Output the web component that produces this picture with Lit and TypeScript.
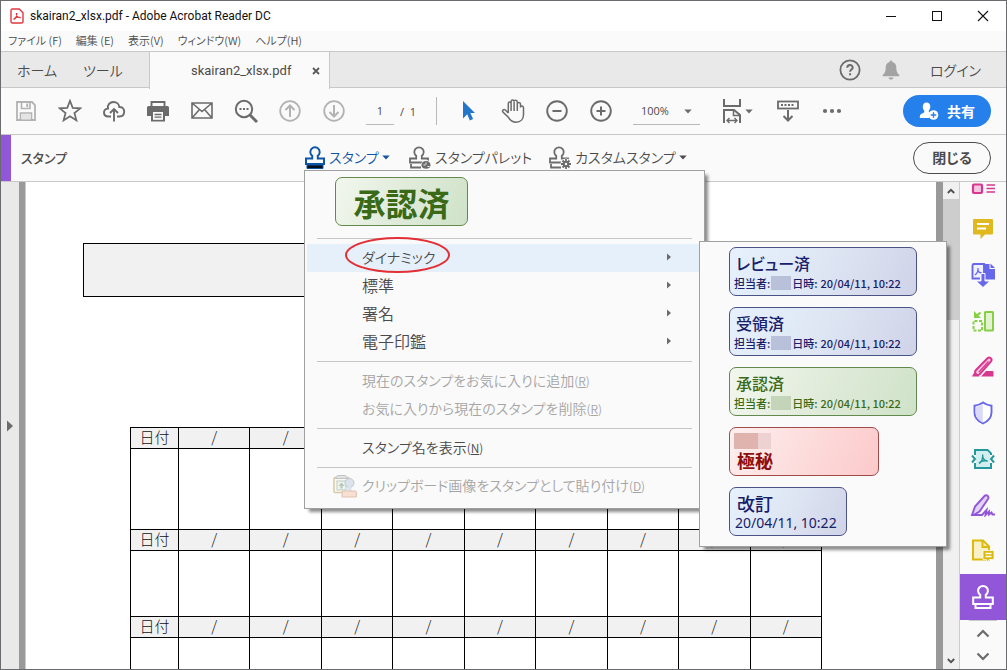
import { LitElement, html, css, svg, nothing } from "lit";
import { customElement, property } from "lit/decorators.js";

const icons: Record<string, [number, number, unknown]> = {
  pdf: [14, 16, svg`<path d="M1.8 1h7.4L13 4.8v8.4A1.5 1.5 0 0 1 11.5 15h-9A1.5 1.5 0 0 1 1 13.500V2.500A1.500 1.500 0 0 1 1.800 1z" fill="#fff" stroke="#e2373f" stroke-width="1.400"/><path d="M3.500 11.500c2-1 3.500-4 3.300-6.500M6.300 5c0 3 2 5 4.500 4.600M3.500 11.300c1.500-1.800 4.500-2.600 7.200-1.700" fill="none" stroke="#e2373f" stroke-width="1.200"/>`],
  min: [12, 12, svg`<path d="M1 6.500h10" stroke="#111"/>`],
  max: [12, 12, svg`<rect x="1.500" y="1.500" width="9" height="9" fill="none" stroke="#111"/>`],
  close: [12, 12, svg`<path d="M1 1l10 10M11 1L1 11" stroke="#111" stroke-width="1.100"/>`],
  tabx: [8, 8, svg`<path d="M1 1l6 6M7 1L1 7" stroke="#5a5a5a" stroke-width="1.800"/>`],
  help: [22, 22, svg`<circle cx="11" cy="11" r="9.600" fill="none" stroke="#6b6b6b" stroke-width="1.800"/><path d="M8.300 8.800c0-3.600 5.400-3.500 5.400-.3 0 2-2.600 2-2.600 4.200M11.100 14.200v2" fill="none" stroke="#6b6b6b" stroke-width="2"/>`],
  bell: [18, 20, svg`<path d="M9 0.500c1 0 1.300.6 1.300 1.500 2.800.6 4 2.800 4 5.500 0 3.500.6 5.500 3 7.500v1.300H.7V15c2.400-2 3-4 3-7.500 0-2.700 1.200-4.900 4-5.500 0-.9.300-1.500 1.300-1.500zM6.500 17.500h5c-.3 1.500-1.300 2-2.500 2s-2.200-.5-2.500-2z" fill="#a3a3a3"/>`],
  save: [22, 22, svg`<path d="M2 2h15l3 3v15H2z" fill="none" stroke="#b3b3b3" stroke-width="1.800"/><path d="M6.500 2v6.500h8.500V2M5.500 20v-7h11v7" fill="none" stroke="#b3b3b3" stroke-width="1.600"/><path d="M11.200 3.500h2v3.500h-2z" fill="#b3b3b3"/><path d="M6.500 14h9v5.500h-9z" fill="#e4e4e4"/>`],
  star: [24, 24, svg`<path d="M12 1.800l2.700 7.100 7.600.4-5.900 4.700 2 7.400L12 17.200l-6.400 4.200 2-7.400L1.700 9.300l7.600-.4z" fill="none" stroke="#6b6b6b" stroke-width="1.700"/>`],
  cloud: [24, 22, svg`<path d="M9 16.500H6.500C3.500 16.500 2 14.800 2 12.500s1.800-4 4-3.900C5 5 8 2 11.500 2c3.200 0 5.600 2.200 5.800 5 2.800-.3 4.900 1.800 4.900 4.600 0 2.900-1.900 4.900-4.700 4.900H15" fill="none" stroke="#6b6b6b" stroke-width="1.900"/><path d="M12 21.500v-12M8 13l4-4 4 4" fill="none" stroke="#6b6b6b" stroke-width="1.900"/>`],
  print: [24, 22, svg`<path d="M5.500 6V2h13v4" fill="none" stroke="#6b6b6b" stroke-width="1.900"/><path d="M2.500 6h19A1.500 1.500 0 0 1 23 7.500V16h-4v5.500H5V16H1V7.500A1.500 1.500 0 0 1 2.500 6z" fill="#6b6b6b"/><path d="M7 12h10v7.800H7z" fill="#fafafa"/><path d="M8.500 14.500h7M8.500 17.200h7" stroke="#6b6b6b" stroke-width="1.300"/>`],
  mail: [24, 20, svg`<path d="M2 2h20v15H2zM2 2l10 8.500L22 2M2 17l7.500-8.500M22 17l-7.500-8.500" fill="none" stroke="#6b6b6b" stroke-width="1.600"/>`],
  search: [24, 24, svg`<circle cx="10" cy="10" r="8.200" fill="none" stroke="#6b6b6b" stroke-width="2"/><path d="M16 16l7 7" stroke="#6b6b6b" stroke-width="3"/><path d="M5.500 9h2v2h-2zM9 9h2v2H9zM12.500 9h2v2h-2z" fill="#6b6b6b"/>`],
  up: [22, 22, svg`<circle cx="11" cy="11" r="9.800" fill="none" stroke="#b3b3b3" stroke-width="1.800"/><path d="M11 17V6M6.500 10L11 5.500l4.500 4.500" fill="none" stroke="#b3b3b3" stroke-width="2"/>`],
  down: [22, 22, svg`<circle cx="11" cy="11" r="9.800" fill="none" stroke="#b3b3b3" stroke-width="1.800"/><path d="M11 5v11M6.500 12l4.500 4.500 4.500-4.500" fill="none" stroke="#b3b3b3" stroke-width="2"/>`],
  cursor: [14, 22, svg`<path d="M1 1v17.500l4.200-4.200 2.700 6.200 3.200-1.400-2.700-6H13z" fill="#2476c8"/>`],
  hand: [24, 26, svg`<path d="M7.300 15V5.500c0-2 2.800-2 2.800 0V3.600c0-2.100 3-2.100 3 0v0c0-2 3.200-1.800 3.200.3v2c0-2 3.200-1.900 3.200.2v3.400c0-2 3-1.900 3 .2V16.500c0 4.500-2.800 7.700-7.500 7.700-4 0-6-2-7.700-5L1.900 14c-1-2 1-3.200 2.500-2L7.300 15M10.100 5.500V13M13.100 3.800V13M16.300 5V13" fill="none" stroke="#6b6b6b" stroke-width="1.500"/>`],
  minus: [22, 22, svg`<circle cx="11" cy="11" r="9.800" fill="none" stroke="#6b6b6b" stroke-width="1.900"/><path d="M6.500 11h9" stroke="#6b6b6b" stroke-width="2"/>`],
  plus: [22, 22, svg`<circle cx="11" cy="11" r="9.800" fill="none" stroke="#6b6b6b" stroke-width="1.900"/><path d="M6.500 11h9M11 6.500v9" stroke="#6b6b6b" stroke-width="2"/>`],
  caret: [8, 5, svg`<path d="M.3.500h7.400L4 4.500z" fill="currentColor"/>`],
  fit: [18, 26, svg`<path d="M1 1v7h16V1M1 25V12h10l6 5v8" fill="none" stroke="#6b6b6b" stroke-width="2"/><path d="M10.500 12v5.500H17" fill="none" stroke="#6b6b6b" stroke-width="1.500"/><path d="M4 22.500h10M6.500 20L4 22.500 6.500 25M11.500 20l2.500 2.500-2.500 2.500" fill="none" stroke="#6b6b6b" stroke-width="1.400"/>`],
  keyboard: [22, 22, svg`<rect x="1" y="1.500" width="20" height="7" fill="none" stroke="#6b6b6b" stroke-width="1.800"/><path d="M4 5h14" stroke="#6b6b6b" stroke-width="1.800" stroke-dasharray="2 1.500"/><path d="M11 10v10.500M6.500 16l4.500 4.500 4.500-4.500" fill="none" stroke="#6b6b6b" stroke-width="2"/>`],
  dots: [20, 6, svg`<circle cx="3" cy="3" r="2.100" fill="#6b6b6b"/><circle cx="10" cy="3" r="2.100" fill="#6b6b6b"/><circle cx="17" cy="3" r="2.100" fill="#6b6b6b"/>`],
  person: [20, 18, svg`<path d="M7.500.500c2.500 0 3.800 1.700 3.800 4.200 0 1.800-.8 3-1.600 4-.2 1.300.6 1.600 1.800 2.100-1.500 1.500-1.800 3.500-1 5.200H.8c0-3.500.8-4 3-4.800 1.200-.5 1.800-1 1.500-2.500-.8-1-1.500-2.200-1.500-4C3.800 2.200 5 .5 7.500.5z" fill="#fff"/><circle cx="14.500" cy="13" r="4.800" fill="#fff"/><path d="M14.500 10.200v5.600M11.700 13h5.600" stroke="#2680eb" stroke-width="1.400"/>`],
  stamp: [22, 24, svg`<path d="M8.200 13.500V10.800a4.700 4.700 0 1 1 5.600 0v2.700H20v5.500H2v-5.500z" fill="none" stroke="#0f55a5" stroke-width="2"/><path d="M3 20h16v3.500H3z" fill="#06101c" stroke="#0f55a5" stroke-width="1"/>`],
  palette: [24, 24, svg`<path d="M8.200 13.500V10.800a4.700 4.700 0 1 1 5.600 0v2.700H20v4H2v-4zM3 19v3.500h10" fill="none" stroke="#6b6b6b" stroke-width="1.800"/><circle cx="18" cy="20" r="5" fill="#fafafa"/><path d="M18 16c3 0 4.500 2 4.500 4.200 0 2.300-2 3.600-4.500 3.600s-4.500-1.300-4.500-3.600C13.500 18 15 16 18 16z" fill="#6b6b6b"/><path d="M15.500 20h2M19.500 21.500h2M18 17.500v2" stroke="#fafafa"/>`],
  custom: [24, 24, svg`<path d="M8.200 13.500V10.800a4.700 4.700 0 1 1 5.600 0v2.700H20v4H2v-4zM3 19v3.500h10" fill="none" stroke="#6b6b6b" stroke-width="1.800"/><circle cx="18" cy="19" r="5.500" fill="#fafafa"/><path d="M18 14v10M13 19h10M14.500 15.500l7 7M21.500 15.500l-7 7" stroke="#6b6b6b" stroke-width="1.800"/><circle cx="18" cy="19" r="3.300" fill="#6b6b6b"/><circle cx="18" cy="19" r="1.200" fill="#fafafa"/>`],
  clip: [26, 26, svg`<rect x="2" y="4.500" width="15" height="15" rx="1" fill="#faf8f2" stroke="#d6cba8" stroke-width="1.500"/><path d="M5.500 2.500h8l2 3h-12z" fill="#e0e3e4" stroke="#c4c4c4"/><rect x="5" y="8" width="9" height="9" fill="#eef3f0" stroke="#c0cbc4"/><path d="M9.500 9.500l3 3.500h-6zM8.500 13h2v2.500h-2z" fill="#b4c9b7"/><circle cx="17.500" cy="10" r="4.500" fill="#dce3ed" stroke="#c0c8d2"/><path d="M16 14h3l1 4.500h-5z" fill="#dce3ed"/><path d="M10.500 18H24l.5 3v3H10v-3z" fill="#f7dfd2" stroke="#dfc3b4"/>`],
  organize: [26, 24, svg`<rect x="3" y="13.500" width="9" height="8.500" rx="1" fill="#f2c8e0" stroke="#d83790" stroke-width="2.200"/><path d="M16.500 14h8.500M16.500 17.500h8.500M16.500 21h8.500" stroke="#d83790" stroke-width="1.400"/>`],
  comment: [22, 22, svg`<path d="M2 1h18a1 1 0 0 1 1 1v13.500a1 1 0 0 1-1 1h-7L8.500 21v-4.500H2a1 1 0 0 1-1-1V2a1 1 0 0 1 1-1z" fill="#dfb91f"/><path d="M5 6h12M5 10.500h9" stroke="#fff" stroke-width="1.900"/>`],
  exportpdf: [26, 26, svg`<path d="M10 16.500H2.500V3.500A1.500 1.500 0 0 1 4 2h10v9" fill="#f0f0ff" stroke="#6767ec" stroke-width="1.900"/><path d="M14 2h5.500v5H25v10.500H14z" fill="#6767ec"/><path d="M20.500 1.500L25 6h-4.500z" fill="#6767ec"/><path d="M5 13c2-1.500 3.300-3.800 3-7M7.800 8c.5 1.800 2 3 4 3" fill="none" stroke="#6767ec" stroke-width="1.300"/><path d="M11 11.500h4V19h5l-7 6.500L6 19h5z" fill="#6767ec" stroke="#fafafa" stroke-width="1"/>`],
  combine: [24, 24, svg`<rect x="14" y="3" width="8" height="18.500" rx=".5" fill="#e2f2d3" stroke="#85d044" stroke-width="2"/><path d="M11 12H2.500v9.500H11z" fill="none" stroke="#85d044" stroke-width="2" stroke-dasharray="3 1.500"/><path d="M3 2v7h7L7.500 6.500l3-2.500-2-1-2.500 2z" fill="#85d044"/>`],
  edit: [24, 24, svg`<path d="M10 21.500L15 16h6.500a1 1 0 0 1 1 1v4.500z" fill="#d83790"/><path d="M1 21.500l1.500-3 3-1 3 4z" fill="#d83790"/><path d="M4.500 15.500L16.500 3.200c2.200-2 5.300.8 3.500 3.200L8.500 19.500c-2.500 1.500-5.500-1-4-4z" fill="#f3c3de" stroke="#d83790" stroke-width="2"/><path d="M8 17L17.500 6.500" stroke="#d83790" stroke-width="1.200"/>`],
  shield: [22, 24, svg`<path d="M11 1.500c2.500 1.800 5 2.800 8.500 3.200v6.800c0 5.500-4 9-8.500 11-4.500-2-8.500-5.500-8.500-11V4.700C6 4.300 8.500 3.300 11 1.500z" fill="#fff" stroke="#6767ec" stroke-width="1.900"/><path d="M10.800 3v18.500C7 19.500 3.700 16.500 3.700 11.500V6C6.500 5.500 8.800 4.500 10.800 3z" fill="#dadaf8"/>`],
  compress: [26, 22, svg`<path d="M5 7V2h12.500L21 5.500V7M5 15v5h16v-5" fill="none" stroke="#23979b" stroke-width="2"/><path d="M6 3h11l3 3v13H6z" fill="#d3eeee"/><path d="M2 7.500L5 11l-3 3.500M24 7.500L21 11l3 3.500" fill="none" stroke="#23979b" stroke-width="2"/><path d="M9 15.500c2.500-1.500 4-4.500 3.700-9M12.700 9c.7 2.200 2.600 4 5 4M9 15c2-2 5-2.500 8.500-2" fill="none" stroke="#23979b" stroke-width="1.400"/>`],
  sign: [26, 24, svg`<path d="M2 22l3-8.500L14.500 3c2-2 5 .5 3.500 3L9.500 18.500 3.500 22z" fill="#e2d3f6" stroke="#9256d9" stroke-width="1.900"/><path d="M2 22h10l4.500-5-1 5 3.500-3.500v3l2.500-2 1 2H25" fill="none" stroke="#9256d9" stroke-width="1.900"/>`],
  note: [24, 24, svg`<path d="M2 1.500h10l6 6V20.500H2z" fill="#f8f1c8" stroke="#ddb90a" stroke-width="2"/><path d="M11.500 1.500v6.500H18" fill="none" stroke="#ddb90a" stroke-width="2"/><path d="M12 11.500h11v9h-5L15.500 23.500v-3H12z" fill="#ddb90a" stroke="#fafafa" stroke-width=".8"/><path d="M14.500 14.500h6M14.500 17.500h6" stroke="#fff" stroke-width="1.300"/>`],
  stampw: [22, 26, svg`<path d="M8.200 13.500V10.800a4.900 4.900 0 1 1 5.600 0v2.700h7V20H1.200v-6.500zM3.500 20v4h15v-4" fill="none" stroke="#fff" stroke-width="2"/>`],
  chevu: [14, 9, svg`<path d="M1.500 7.500L7 2l5.500 5.500" fill="none" stroke="#6b6b6b" stroke-width="2.200"/>`],
  chevd: [14, 9, svg`<path d="M1.500 1.500L7 7l5.500-5.500" fill="none" stroke="#6b6b6b" stroke-width="2.200"/>`],
  sup: [8, 6, svg`<path d="M.8 5L4 1.800 7.200 5" fill="none" stroke="#505050" stroke-width="1.800"/>`],
  sdown: [8, 6, svg`<path d="M.8 1L4 4.200 7.200 1" fill="none" stroke="#505050" stroke-width="1.800"/>`],
  right: [6, 8, svg`<path d="M1 .5L5 4 1 7.500z" fill="#6b6b6b"/>`],
  expand: [6, 12, svg`<path d="M0 .5L6 6l-6 5.500z" fill="#6b6b6b"/>`],
};

const icon = (name: string) => {
  const [w, h, body] = icons[name];
  return html`<svg width=${w} height=${h} viewBox="0 0 ${w} ${h}" aria-hidden="true">${body}</svg>`;
};

const base = css`
  :host, * { box-sizing: border-box; }
  svg { display: block; flex: none; }
  button {
    appearance: none; border: 0; background: none; padding: 0; margin: 0;
    font: inherit; color: inherit; font-feature-settings: inherit; text-align: left;
  }
`;

@customElement("rubber-stamp")
class RubberStamp extends LitElement {
  @property() heading = "";
  @property() tone = "blue";
  @property() who = "";
  @property() when = "";
  @property() date = "";
  static styles = [base, css`
    :host { display: block; }
    .stamp {
      display: flex; flex-direction: column; justify-content: center;
      width: 100%; height: 49px; padding: 0 4px; border: 1px solid; border-radius: 7px;
      font-family: "Noto Sans CJK JP", sans-serif; font-feature-settings: "palt"; font-weight: 500;
    }
    .blue { color: #18206a; border-color: #4a5286; background: linear-gradient(115deg, #e6f1fd, #dfe7f4 45%, #d0d3e8); }
    .green { color: #3a6a18; border-color: #64894e; background: linear-gradient(115deg, #f2f7ee, #e0ebda 50%, #cfe2c8); }
    .red { color: #8f0d0d; border-color: #a04a4a; background: linear-gradient(115deg, #fdf0ef, #fddcdc 50%, #fcc9ca); }
    .title { padding-left: 2px; font-size: 16px; line-height: 22px; }
    .line { display: flex; align-items: center; font-size: 11px; line-height: 18px; white-space: nowrap; }
    .num { margin-left: 3px; }
    .mask { flex: none; width: 20px; height: 14px; margin: 0 1px; opacity: 0.2; background: currentColor; }
    .date { padding-left: 1px; font-family: "Noto Sans", sans-serif; font-weight: 400; font-size: 14px; line-height: 18px; }
    .pad { padding-left: 3px; font-size: 18px; }
    .red .pad { font-weight: 700; }
    .block { display: flex; }
    .block i { width: 24px; height: 16px; background: #dfb3ae; }
    .block i + i { width: 13px; background: #eed2d2; }
    .large { align-items: center; }
    .large .title { padding: 0; font-size: 32px; line-height: 44px; font-weight: 700; }
  `];
  render() {
    const large = this.tone === "large";
    return html`<div class="stamp ${large ? "green large" : this.tone}">
      ${this.tone === "red" ? html`<span class="block"><i></i><i></i></span>` : nothing}
      <span class="title ${this.when || large ? "" : "pad"}">${this.heading}</span>
      ${this.when ? html`<span class="line">${this.who}<span class="mask"></span>日時:<span class="num">${this.when}</span></span>` : nothing}
      ${this.date ? html`<span class="date">${this.date}</span>` : nothing}
    </div>`;
  }
}

@customElement("stamp-menu")
class StampMenu extends LitElement {
  static styles = [base, css`
    :host { display: block; }
    .menu, .sub { background: #fafafa; border: 1px solid #a0a0a0; box-shadow: 4px 4px 3px -1px rgba(0, 0, 0, 0.45); }
    .menu { width: 401px; padding: 6px 2px 7px; }
    .fav { display: block; width: 133px; margin: 0 0 12px 28px; }
    hr { border: 0; height: 1px; background: #c6c6c6; margin: 5px 10px; }
    .item {
      position: relative; display: flex; align-items: center; width: 100%; height: 28px;
      padding: 0 30px 3px 55px; white-space: nowrap; font-size: 16px; line-height: 24px; color: #4b4b4b;
    }
    .item svg:last-child { margin-left: auto; }
    .item:disabled { color: #a5a5a5; }
    .kana { font-size: 14px; }
    .current { background: #e5f0fa; }
    .key { font-size: 12px; padding-top: 2px; }
    .ring { position: absolute; left: 38px; top: -7px; width: 105px; height: 36px; border: 2px solid #e23036; border-radius: 50%; }
    .clip { padding-left: 25px; gap: 4px; }
    .clip svg:first-child { margin-left: 0; }
    .sub {
      position: absolute; left: 395px; top: 71px; width: 248px; padding: 5px 29px 10px;
      display: flex; flex-direction: column; gap: 11px; align-items: flex-start;
    }
    .wide { width: 188px; }
    .mid { width: 150px; }
    .narrow { width: 118px; }
  `];
  private entry(label: string, key = "", disabled = false) {
    return html`<button class="item ${key ? "kana" : ""}" role="menuitem" ?disabled=${disabled}>${label}${key
      ? html`<span class="key">(<u>${key}</u>)</span>` : icon("right")}</button>`;
  }
  private stamp(size: string, tone: string, heading: string, who = "", when = "", date = "") {
    return html`<button class=${size} role="menuitem"><rubber-stamp tone=${tone} heading=${heading} who=${who} when=${when} date=${date}></rubber-stamp></button>`;
  }
  render() {
    const when = "20/04/11, 10:22";
    return html`
      <div class="menu" role="menu">
        <button class="fav" role="menuitem"><rubber-stamp tone="large" heading="承認済"></rubber-stamp></button>
        <hr />
        <button class="item kana current" role="menuitem" aria-haspopup="menu">ダイナミック<span class="ring"></span>${icon("right")}</button>
        ${["標準", "署名", "電子印鑑"].map((t) => this.entry(t))}
        <hr />
        ${this.entry("現在のスタンプをお気に入りに追加", "R", true)}
        ${this.entry("お気に入りから現在のスタンプを削除", "R", true)}
        <hr />
        ${this.entry("スタンプ名を表示", "N")}
        <hr />
        <button class="item kana clip" role="menuitem" disabled>${icon("clip")}<span>クリップボード画像をスタンプとして貼り付け<span class="key">(<u>D</u>)</span></span></button>
      </div>
      <div class="sub" role="menu">
        ${this.stamp("wide", "blue", "レビュー済", "担当者:", when)}
        ${this.stamp("wide", "blue", "受領済", "担当者:", when)}
        ${this.stamp("wide", "green", "承認済", "担当者:", when)}
        ${this.stamp("mid", "red", "極秘")}
        ${this.stamp("narrow", "blue", "改訂", "", "", when)}
      </div>`;
  }
}

@customElement("document-page")
class DocumentPage extends LitElement {
  static styles = [base, css`
    :host { display: block; overflow: hidden; background: #fff; }
    .box { height: 54px; margin: 61px 66px 0 57px; border: 1px solid #000; background: #f1f1f1; }
    table {
      width: 692px; margin: 130px 0 0 104px; border-collapse: collapse; table-layout: fixed;
      font-family: "Noto Sans CJK JP", sans-serif; font-weight: 300; font-size: 15px; line-height: 16px; color: #111;
    }
    th, td { border: 1px solid #000; padding: 0 0 2px; text-align: center; font-weight: 300; }
    th { background: #f1f1f1; height: 21px; }
    .first { width: 48px; }
    .tall td { height: 81px; }
    .short td { height: 66px; }
  `];
  render() {
    const days = Array.from({ length: 9 });
    return html`<div class="box"></div>
      <table>
        ${["tall", "short", "tall"].map((size) => html`
          <tr><th class="first">日付</th>${days.map(() => html`<th>/</th>`)}</tr>
          <tr class=${size}><td></td>${days.map(() => html`<td></td>`)}</tr>`)}
      </table>`;
  }
}

@customElement("app-root")
class AppRoot extends LitElement {
  static styles = [base, css`
    :host {
      display: flex; flex-direction: column; height: 100vh; overflow: hidden; background: #fafafa;
      border: 1px solid #6a6b6e; color: #4b4b4b;
      font-family: "Noto Sans CJK JP", sans-serif; font-weight: 350; font-feature-settings: "palt"; font-size: 14px;
    }
    .titlebar { display: flex; align-items: center; flex: none; height: 30px; padding: 0 17px 0 9px; gap: 6px; background: #fff; }
    .caption { flex: 1; font-family: Roboto, sans-serif; font-weight: 400; font-size: 12px; color: #111; }
    .winbtns { display: flex; gap: 34px; }
    .menubar { display: flex; align-items: center; flex: none; height: 20px; padding: 0 7px 2px; gap: 14px; font-size: 11px; }
    .tabs { display: flex; align-items: center; flex: none; height: 37px; border: solid #c8c8c8; border-width: 1px 0; background: #e9e9e9; }
    .home { padding: 0 16px; width: 82px; }
    .tools { width: 66px; }
    .tab {
      display: flex; align-items: center; width: 181px; height: 37px; margin: 0 auto -2px 0; padding: 0 9px 0 41px;
      border: solid #c8c8c8; border-width: 0 1px; background: #fafafa;
      font-family: Roboto, sans-serif; font-weight: 400; font-size: 13px;
    }
    .tab button { margin-left: auto; }
    .account { display: flex; align-items: center; gap: 21px; padding-right: 25px; }
    .login { padding-left: 9px; }
    .toolbar { display: flex; align-items: center; flex: none; height: 47px; padding: 0 15px 0 3px; border-bottom: 1px solid #c8c8c8; }
    .cell { display: flex; align-items: center; justify-content: center; width: 44px; height: 44px; }
    .page, .zoom {
      appearance: none; border: 0; border-bottom: 1px solid #b9b9b9; border-radius: 0; background: none;
      height: 27px; padding: 0; color: #4b4b4b; font-family: "Open Sans", "Noto Sans", sans-serif; font-size: 11px;
    }
    .page { width: 28px; margin-left: 10px; text-align: center; }
    .count { width: 36px; font-family: "Open Sans", "Noto Sans", sans-serif; font-size: 11px; font-weight: 400; margin-left: 6px; white-space: pre; }
    .rule { width: 1px; height: 28px; margin-right: 10px; background: #b9b9b9; }
    .zoombox { display: flex; align-items: center; margin: 0 31px 0 10px; color: #6b6b6b; }
    .zoom { width: 67px; padding-left: 8px; }
    .zoombox svg { margin-left: -16px; }
    .fit { display: flex; align-items: center; gap: 4px; margin-right: 13px; color: #6b6b6b; }
    .share {
      display: flex; align-items: center; justify-content: center; gap: 8px; width: 88px; height: 32px; margin-left: auto;
      padding-bottom: 1px; border-radius: 16px; background: #2680eb; color: #fff; font-weight: 700; line-height: 28px;
    }
    .panel { display: flex; align-items: center; flex: none; height: 47px; padding-right: 15px; border-bottom: 1px solid #c8c8c8; }
    .mark { align-self: stretch; width: 10px; background: #9256d9; }
    .name { width: 293px; padding: 0 0 2px 10px; font-size: 13px; font-weight: 500; margin: 0; }
    .anchor { position: relative; }
    .act { display: flex; align-items: center; gap: 3px; height: 46px; padding-bottom: 2px; white-space: nowrap; }
    .blue { color: #0f55a5; width: 104px; }
    .pal { width: 140px; }
    .pop { position: absolute; z-index: 2; left: 0; top: 35px; }
    .shut {
      width: 78px; height: 32px; margin-left: auto; border: 1px solid #4b4b4b; border-radius: 16px;
      text-align: center; font-weight: 700; line-height: 26px; padding-bottom: 2px;
    }
    .body { display: flex; flex: 1; min-height: 0; }
    .strip { display: flex; align-items: center; width: 18px; padding-left: 6px; background: #e9e9e9; }
    .edge { width: 7px; background: #999; border-right: 1px solid #ccc; }
    .gutter { width: 7px; background: #999; }
    document-page { flex: 1; min-width: 0; }
    .scroll { display: flex; flex-direction: column; width: 17px; background: #f0f0f0; border-right: 1px solid #ccc; }
    .arrow { display: flex; align-items: center; justify-content: center; height: 17px; }
    .thumb { height: 121px; margin-bottom: auto; background: #cdcdcd; }
    .rail { display: flex; flex-direction: column; justify-content: flex-end; width: 46px; overflow: hidden; }
    .tool { display: flex; align-items: center; justify-content: center; flex: none; height: 46px; }
    .active { background: #9256d9; }
    .steps { display: flex; flex-direction: column; align-items: center; flex: none; height: 49px; gap: 14px; padding-top: 8px; margin: 0 9px; border-top: 1px solid #c8c8c8; }
  `];
  private cell(name: string, label: string) {
    return html`<button class="cell" aria-label=${label}>${icon(name)}</button>`;
  }
  render() {
    return html`
      <header class="titlebar">${icon("pdf")}
        <span class="caption">skairan2_xlsx.pdf - Adobe Acrobat Reader DC</span>
        <div class="winbtns">
          <button aria-label="最小化">${icon("min")}</button><button aria-label="最大化">${icon("max")}</button><button aria-label="閉じる">${icon("close")}</button>
        </div>
      </header>
      <nav class="menubar">${["ファイル (F)", "編集 (E)", "表示(V)", "ウィンドウ(W)", "ヘルプ(H)"].map((t) => html`<button>${t}</button>`)}</nav>
      <nav class="tabs">
        <button class="home">ホーム</button><button class="tools">ツール</button>
        <div class="tab"><span>skairan2_xlsx.pdf</span><button aria-label="タブを閉じる">${icon("tabx")}</button></div>
        <div class="account"><button aria-label="ヘルプ">${icon("help")}</button><button aria-label="通知">${icon("bell")}</button><button class="login">ログイン</button></div>
      </nav>
      <div class="toolbar">
        ${this.cell("save", "保存")}${this.cell("star", "スター")}${this.cell("cloud", "アップロード")}${this.cell("print", "印刷")}
        ${this.cell("mail", "メール")}${this.cell("search", "検索")}${this.cell("up", "前のページ")}${this.cell("down", "次のページ")}
        <input class="page" aria-label="ページ" value="1" /><span class="count">/  1</span><span class="rule"></span>
        ${this.cell("cursor", "選択")}${this.cell("hand", "手のひら")}${this.cell("minus", "縮小")}${this.cell("plus", "拡大")}
        <span class="zoombox"><select class="zoom" aria-label="倍率"><option>100%</option></select>${icon("caret")}</span>
        <button class="fit" aria-label="ページに合わせる">${icon("fit")}${icon("caret")}</button>
        ${this.cell("keyboard", "ツールバー")}${this.cell("dots", "その他")}
        <button class="share">${icon("person")}共有</button>
      </div>
      <div class="panel">
        <span class="mark"></span><h1 class="name">スタンプ</h1>
        <div class="anchor">
          <button class="act blue" aria-haspopup="menu">${icon("stamp")}スタンプ${icon("caret")}</button>
          <stamp-menu class="pop"></stamp-menu>
        </div>
        <button class="act pal">${icon("palette")}スタンプパレット</button>
        <button class="act">${icon("custom")}カスタムスタンプ${icon("caret")}</button>
        <button class="shut">閉じる</button>
      </div>
      <main class="body">
        <div class="strip">${icon("expand")}</div><div class="edge"></div>
        <document-page></document-page>
        <div class="gutter"></div>
        <div class="scroll"><div class="arrow">${icon("sup")}</div><div class="thumb"></div><div class="arrow">${icon("sdown")}</div></div>
        <aside class="rail">
          ${["organize", "comment", "exportpdf", "combine", "edit", "shield", "compress", "sign", "note"].map((n) => html`<button class="tool" aria-label=${n}>${icon(n)}</button>`)}
          <button class="tool active" aria-label="スタンプ">${icon("stampw")}</button>
          <div class="steps">${icon("chevu")}${icon("chevd")}</div>
        </aside>
      </main>`;
  }
}
